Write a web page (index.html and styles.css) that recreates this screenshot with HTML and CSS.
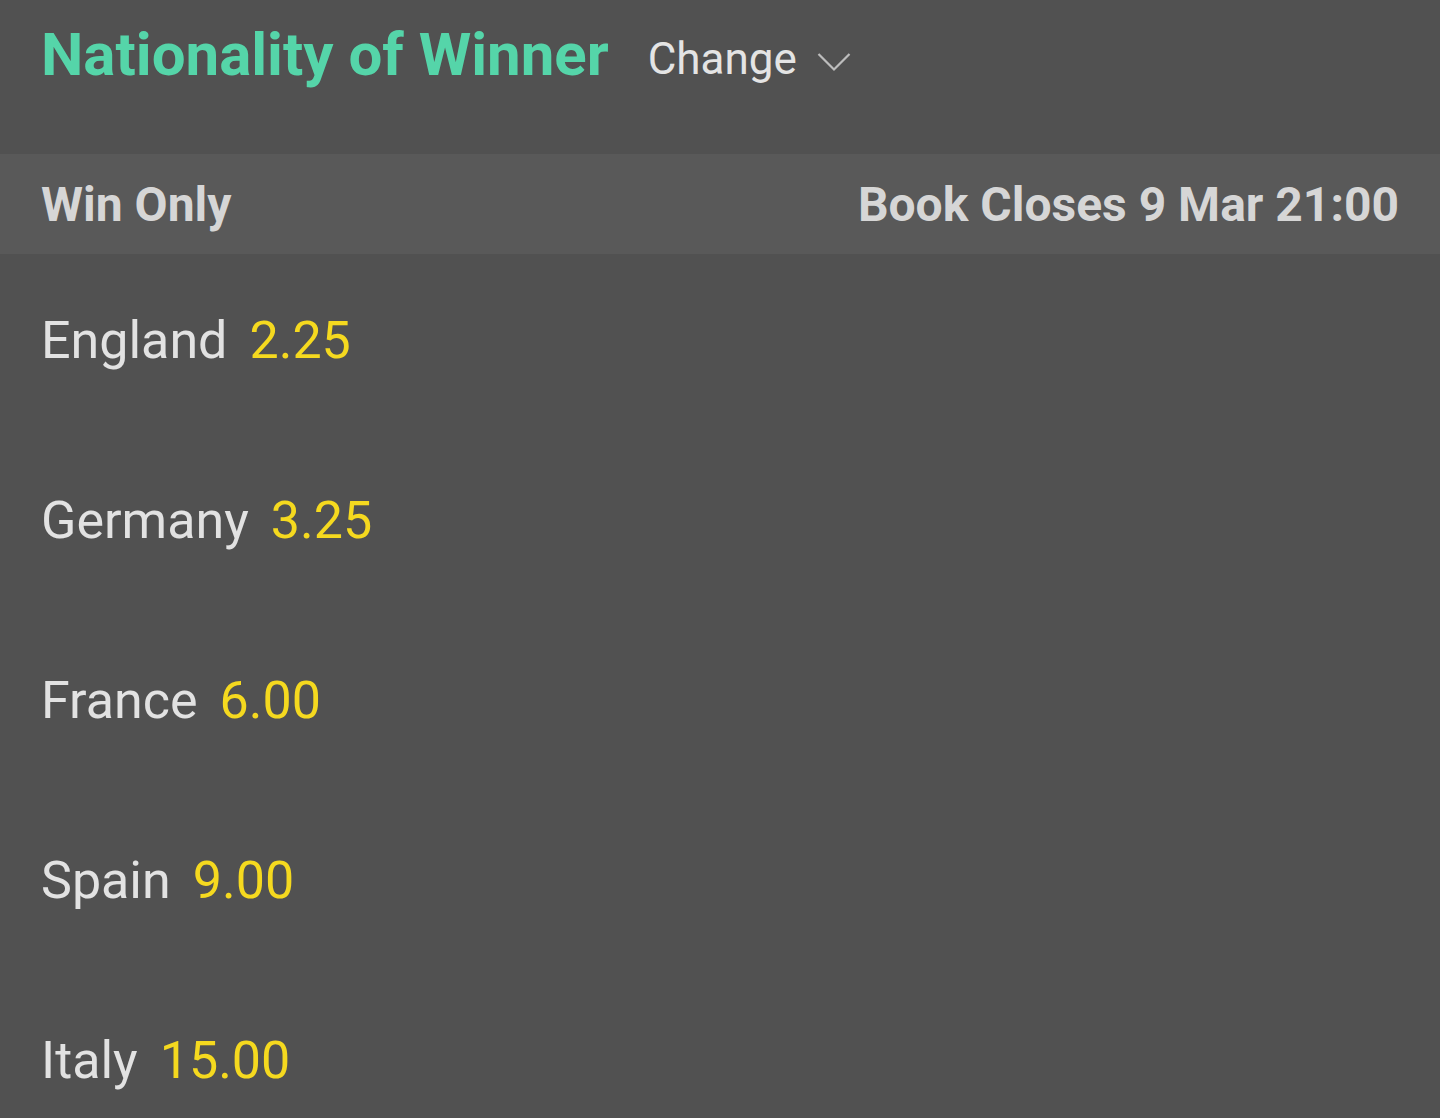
FILE: index.html
```html
<!DOCTYPE html>
<html>
<head>
<meta charset="utf-8">
<link rel="stylesheet" href="styles.css">
</head>
<body>
<div class="page">
  <div class="title-row">
    <h1 class="title">Nationality of Winner</h1>
    <div class="change">Change
      <svg class="chev" width="34" height="20" viewBox="0 0 34 20"><path d="M1.5 2 L17 17.5 L32.5 2" fill="none" stroke="#bdbdbd" stroke-width="2.2"/></svg>
    </div>
  </div>
  <div class="band">
    <span>Win Only</span>
    <span>Book Closes 9 Mar 21:00</span>
  </div>
  <ul class="list">
    <li class="row"><span class="name">England</span><span class="odds">2.25</span></li>
    <li class="row"><span class="name">Germany</span><span class="odds">3.25</span></li>
    <li class="row"><span class="name">France</span><span class="odds">6.00</span></li>
    <li class="row"><span class="name">Spain</span><span class="odds">9.00</span></li>
    <li class="row"><span class="name">Italy</span><span class="odds">15.00</span></li>
  </ul>
</div>
</body>
</html>
```
FILE: styles.css
```css
html, body {
  margin: 0;
  padding: 0;
  background: #515151;
  overflow: hidden;
}
body {
  font-family: Roboto, "Liberation Sans", sans-serif;
  width: 1440px;
  height: 1118px;
}
.page {
  display: flex;
  flex-direction: column;
}
.title-row {
  height: 154px;
  display: flex;
  align-items: flex-start;
  padding: 20px 41px 0;
  box-sizing: border-box;
  gap: 39px;
}
.title {
  margin: 0;
  font-size: 60px;
  font-weight: 700;
  color: #55d5a9;
  line-height: 70px;
}
.change {
  display: flex;
  align-items: center;
  gap: 20px;
  font-size: 44px;
  color: #e4e4e4;
  line-height: 70px;
  padding-top: 4px;
}
.chev {
  margin-top: 6px;
}
.band {
  height: 100px;
  background: #595959;
  display: flex;
  justify-content: space-between;
  align-items: center;
  padding: 0 41px;
  font-size: 48px;
  font-weight: 700;
  color: #d6d6d6;
}
.list {
  list-style: none;
  margin: 0;
  padding: 0;
}
.row {
  height: 180px;
  box-sizing: border-box;
  display: flex;
  align-items: center;
  padding: 0 41px 8px;
  gap: 22px;
  font-size: 52px;
}
.name {
  color: #e2e2e2;
}
.odds {
  color: #f5d91f;
}
```
